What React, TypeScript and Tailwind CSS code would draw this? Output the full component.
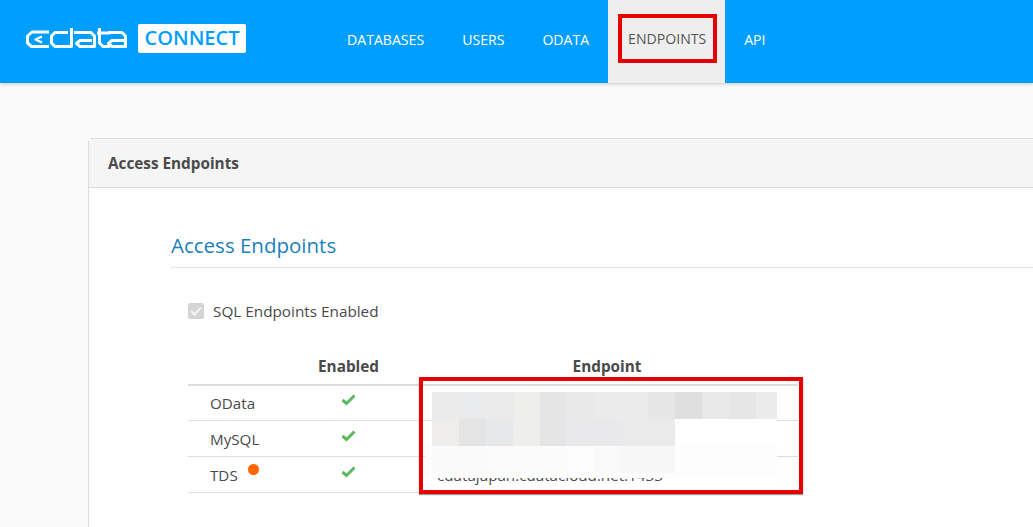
const font = "font-['Segoe_UI','Open_Sans','Noto_Sans',sans-serif]";

// mosaic over the endpoint values
const mosaic = [
  ['', 'bg-[#ebebeb]', 'bg-[#e9eaec]', 'bg-[#ebebeb]', 'bg-[#eeeeec]', 'bg-[#e5e5e5]', 'bg-[#e9e9e9]', 'bg-[#ebebeb]', 'bg-[#ebebeb]', 'bg-[#e6e6e6]', 'bg-[#dfdfdf]', 'bg-[#e9e9e9]', 'bg-[#e6e6e6]', 'bg-[#ebebeb]'],
  ['', 'bg-[#eeedeb]', 'bg-[#e4e4e4]', 'bg-[#e7e8ea]', 'bg-[#eeeeec]', 'bg-[#e5e5e5]', 'bg-[#e9e9eb]', 'bg-[#e9e9eb]', 'bg-[#eaeaea]', 'bg-[#eaeaea]', 'bg-white', 'bg-white', 'bg-white', 'bg-white'],
  ['bg-[#fdfdfd]', 'bg-[#fafafa]', 'bg-[#fafafa]', 'bg-[#fbfbfb]', 'bg-[#fbfbfb]', 'bg-[#fbfbfb]', 'bg-[#fcfcfc]', 'bg-[#f9f9f9]', 'bg-[#f7f7f7]', 'bg-[#f7f7f7]', 'bg-[#fdfdfd]', 'bg-[#fdfdfd]', 'bg-[#fdfdfd]', 'bg-[#fdfdfd]'],
  ['bg-[#fdfdfd]', 'bg-[#fdfdfd]', 'bg-[#fdfdfd]', 'bg-[#fdfdfd]', 'bg-[#fdfdfd]', 'bg-[#fdfdfd]', 'bg-[#fdfdfd]', 'bg-[#fdfdfd]', 'bg-[#fdfdfd]', 'bg-[#fdfdfd]', 'bg-[#fdfdfd]', 'bg-[#fdfdfd]', 'bg-[#fdfdfd]', 'bg-[#fdfdfd]'],
];

function Logo() {
  return (
    <svg width="101" height="20" viewBox="0 0 101 20" fill="none" stroke="#fff" strokeWidth="3" strokeLinejoin="round">
      <path d="M23 4H6L1.5 8V15L5.5 18.5H23" />
      <path d="M16 8.5L9.5 11.5L16 14.5" strokeWidth="2.2" />
      <path d="M45.5 0V18.5H29L25.5 15V8L29 4.5H42" />
      <path d="M48 4.5H65L68.5 8V18.5H54L50.5 15.5L54 12.5H66" />
      <path d="M73.5 0V15L77 18.5H84M71 5H84" />
      <path d="M82 4.5H96L99.5 8V18.5H86L82.5 15.5L86 12.5H98" />
    </svg>
  );
}

function Check() {
  return (
    <svg width="15" height="12" viewBox="0 0 15 12" fill="none" stroke="#5cb85c" strokeWidth="3">
      <path d="M1.5 6L5.5 9.5L13.5 1.5" />
    </svg>
  );
}

function NavItem({ label }: { label: string }) {
  return <span className="px-[19px] pb-[3px] text-[#fff]">{label}</span>;
}

const rows = [
  { name: 'OData', dot: false },
  { name: 'MySQL', dot: false },
  { name: 'TDS', dot: true },
];

export default function App() {
  return (
    <div className={`h-[527px] w-[1033px] overflow-hidden bg-[#fafafa] text-[#4a4a4a] ${font}`}>
      {/* Top bar */}
      <header className="flex h-[83px] items-stretch bg-[#009fff] shadow-[0_1px_4px_rgba(0,0,0,0.2)]">
        <div className="flex w-[328px] items-center pb-[7px] pl-[26px]">
          <Logo />
          <span className="ml-[11px] flex h-[29px] w-[108px] items-center justify-center rounded-[2px] bg-white text-[20px] font-semibold text-[#009fff]">
            CONNECT
          </span>
        </div>
        <nav className="flex items-center text-[14.1px]">
          <NavItem label="DATABASES" />
          <NavItem label="USERS" />
          <NavItem label="ODATA" />
          <div className="flex h-[83px] w-[117px] items-center justify-center bg-[#eeeeee] pb-[6px] pl-px">
            <span className="flex h-[49px] w-[99px] items-center justify-center border-[4px] border-[#e60000] text-[#555]">
              ENDPOINTS
            </span>
          </div>
          <NavItem label="API" />
        </nav>
      </header>

      {/* Card */}
      <main className="pl-[88px] pt-[55px]">
        <section className="h-[400px] w-[1000px] rounded-tl-[4px] border border-[#dddddd] bg-white">
          <div className="flex h-[49px] items-center border-b border-[#dddddd] bg-[#f5f5f5] pl-[19px] text-[15.3px] font-bold">
            Access Endpoints
          </div>
          <div className="relative pl-[81px] pt-[44px]">
            <h2 className="h-[36px] border-b border-[#e5e5e5] pl-px text-[20.5px] font-medium leading-[26px] text-[#1b7fbd]">
              Access Endpoints
            </h2>
            <label className="ml-[18px] mt-[33px] flex items-center gap-[9px] text-[15.3px] leading-[20px]">
              <span className="flex h-[16px] w-[16px] items-center justify-center rounded-[2px] bg-[#d4d4d4]">
                <svg width="12" height="10" viewBox="0 0 12 10" fill="none" stroke="#f2f2f2" strokeWidth="2.4">
                  <path d="M1 5L4.5 8.5L11 1.5" />
                </svg>
              </span>
              SQL Endpoints Enabled
            </label>
            <table className="ml-[18px] mt-[34px] w-[610px] table-fixed border-collapse text-[15.2px]">
              <thead>
                <tr className="h-[29px] border-b-[2px] border-[#dddddd] text-center text-[15.3px] font-bold">
                  <th className="w-[110px] pb-[6px]" />
                  <th className="w-[101px] pb-[6px] font-bold">Enabled</th>
                  <th className="pb-[6px] pl-[17px] font-bold">Endpoint</th>
                </tr>
              </thead>
              <tbody>
                {rows.map((row) => (
                  <tr key={row.name} className="h-[36px] border-b border-[#dddddd]">
                    <td className="pl-[22px] pt-[1px]">
                      {row.name}
                      {row.dot && <span className="relative top-[-6px] ml-[10px] inline-block h-[11px] w-[11px] rounded-full bg-[#ff6600]" />}
                    </td>
                    <td className="pb-[5px] text-center">
                      <span className="inline-flex"><Check /></span>
                    </td>
                    <td className="pl-[38px] pt-[1px]">
                      {row.dot ? 'cdatajapan.cdatacloud.net:1433' : ''}
                    </td>
                  </tr>
                ))}
              </tbody>
            </table>

            {/* Red annotation box with the blurred values */}
            <div className="absolute left-[330px] top-[189px] h-[117px] w-[384px] border-[4px] border-[#e60000] shadow-[0_1px_1px_rgba(0,0,0,0.4)]">
              <div className="ml-[2px] mt-[11px] grid grid-cols-[7px_repeat(12,27px)_21px] grid-rows-[27px_27px_27px_5px]">
                {mosaic.flat().map((tile, i) => (
                  <div key={i} className={tile} />
                ))}
              </div>
            </div>
          </div>
        </section>
      </main>
    </div>
  );
}
